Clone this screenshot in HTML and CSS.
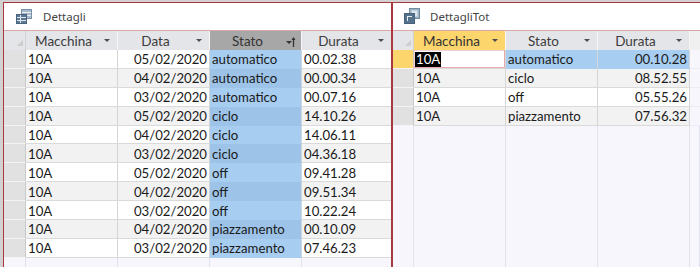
FILE: index.html
```html
<!DOCTYPE html>
<html lang="it">
<head>
<meta charset="utf-8">
<title>Dettagli</title>
<link rel="stylesheet" href="styles.css">
</head>
<body>
<div class="desk">
  <section class="win win-left">
    <div class="title">
      <svg class="ico" width="16" height="15" viewBox="0 0 16 15">
        <rect x="5.5" y="0.5" width="10" height="9" fill="#a9b9c9" stroke="#7890a8"/>
        <line x1="6" y1="3.5" x2="15" y2="3.5" stroke="#e9eef3"/>
        <line x1="6" y1="6.5" x2="15" y2="6.5" stroke="#e9eef3"/>
        <rect x="0.5" y="5.5" width="10" height="9" fill="#5d7893" stroke="#4a6480"/>
        <line x1="1" y1="8.5" x2="10" y2="8.5" stroke="#dfe7ef"/>
        <line x1="1" y1="11.5" x2="10" y2="11.5" stroke="#dfe7ef"/>
        <line x1="4.5" y1="6" x2="4.5" y2="14" stroke="#dfe7ef"/>
      </svg>
      <span>Dettagli</span>
    </div>
    <div class="grid">
      <div class="hrow">
        <div class="hc sel-l corner"><i class="tri"></i></div>
        <div class="hc w92">Macchina<i class="dd"></i></div>
        <div class="hc w92">Data<i class="dd"></i></div>
        <div class="hc w92 sorted">Stato
          <svg class="sorticon" width="10" height="11" viewBox="0 0 10 11">
            <path d="M0 5h6l-3 3z" fill="#333"/>
            <path d="M7.5 11V2" stroke="#333" stroke-width="1.3"/>
            <path d="M5.5 4l2-3 2 3z" fill="#333"/>
          </svg>
        </div>
        <div class="hc w89 last">Durata<i class="dd"></i></div>
      </div>
      <div class="row"><div class="c sel-l"></div><div class="c w92">10A</div><div class="c w92 r">05/02/2020</div><div class="c w92 blue">automatico</div><div class="c w89 last">00.02.38</div></div>
      <div class="row alt"><div class="c sel-l"></div><div class="c w92">10A</div><div class="c w92 r">04/02/2020</div><div class="c w92 blue">automatico</div><div class="c w89 last">00.00.34</div></div>
      <div class="row"><div class="c sel-l"></div><div class="c w92">10A</div><div class="c w92 r">03/02/2020</div><div class="c w92 blue">automatico</div><div class="c w89 last">00.07.16</div></div>
      <div class="row alt"><div class="c sel-l"></div><div class="c w92">10A</div><div class="c w92 r">05/02/2020</div><div class="c w92 blue">ciclo</div><div class="c w89 last">14.10.26</div></div>
      <div class="row"><div class="c sel-l"></div><div class="c w92">10A</div><div class="c w92 r">04/02/2020</div><div class="c w92 blue">ciclo</div><div class="c w89 last">14.06.11</div></div>
      <div class="row alt"><div class="c sel-l"></div><div class="c w92">10A</div><div class="c w92 r">03/02/2020</div><div class="c w92 blue">ciclo</div><div class="c w89 last">04.36.18</div></div>
      <div class="row"><div class="c sel-l"></div><div class="c w92">10A</div><div class="c w92 r">05/02/2020</div><div class="c w92 blue">off</div><div class="c w89 last">09.41.28</div></div>
      <div class="row alt"><div class="c sel-l"></div><div class="c w92">10A</div><div class="c w92 r">04/02/2020</div><div class="c w92 blue">off</div><div class="c w89 last">09.51.34</div></div>
      <div class="row"><div class="c sel-l"></div><div class="c w92">10A</div><div class="c w92 r">03/02/2020</div><div class="c w92 blue">off</div><div class="c w89 last">10.22.24</div></div>
      <div class="row alt"><div class="c sel-l"></div><div class="c w92">10A</div><div class="c w92 r">04/02/2020</div><div class="c w92 blue">piazzamento</div><div class="c w89 last">00.10.09</div></div>
      <div class="row"><div class="c sel-l"></div><div class="c w92">10A</div><div class="c w92 r">03/02/2020</div><div class="c w92 blue">piazzamento</div><div class="c w89 last">07.46.23</div></div>
      <div class="empty"><div class="e sel-l"></div><div class="e w92"></div><div class="e w92"></div><div class="e w92"></div><div class="e w89 last"></div></div>
    </div>
  </section>

  <section class="win win-right">
    <div class="title title-r">
      <svg class="ico" width="16" height="16" viewBox="0 0 16 16">
        <rect x="5.5" y="0.5" width="10" height="10" fill="#9fb4c4" stroke="#6f8ca3"/>
        <rect x="7.5" y="2.5" width="6" height="6" fill="#dce6ee"/>
        <rect x="0.5" y="5.5" width="10" height="10" fill="#55728d" stroke="#45617c"/>
        <path d="M3 8h5v1H4v4H3z" fill="#e6edf3"/>
      </svg>
      <span>DettagliTot</span>
    </div>
    <div class="grid">
      <div class="hrow">
        <div class="hc sel-r corner"><i class="tri"></i></div>
        <div class="hc w92 active">Macchina<i class="dd"></i></div>
        <div class="hc w92">Stato<i class="dd"></i></div>
        <div class="hc w92">Durata<i class="dd"></i></div>
        <div class="hc fill"></div>
      </div>
      <div class="row"><div class="c sel-r cur"></div><div class="c w92 focus"><span class="hl">10A</span></div><div class="c w92 blue">automatico</div><div class="c w92 blue r">00.10.28</div><div class="e fill"></div></div>
      <div class="row alt"><div class="c sel-r"></div><div class="c w92">10A</div><div class="c w92">ciclo</div><div class="c w92 r">08.52.55</div><div class="e fill"></div></div>
      <div class="row"><div class="c sel-r"></div><div class="c w92">10A</div><div class="c w92">off</div><div class="c w92 r">05.55.26</div><div class="e fill"></div></div>
      <div class="row alt"><div class="c sel-r"></div><div class="c w92">10A</div><div class="c w92">piazzamento</div><div class="c w92 r">07.56.32</div><div class="e fill"></div></div>
      <div class="empty"><div class="e sel-r"></div><div class="e w92"></div><div class="e w92"></div><div class="e w92"></div><div class="e fill"></div></div>
    </div>
  </section>
</div>
</body>
</html>
```

FILE: styles.css
```css
* { box-sizing: border-box; }
html, body { margin: 0; height: 100%; }
body {
  background: #d2d2d2;
  font-family: Lato, "Liberation Sans", sans-serif;
  overflow: hidden;
}
.desk {
  display: flex;
  height: 267px;
  padding: 2px 0 0 3px;
}
.win {
  background: #fff;
  border: 1px solid #a83a3f;
  border-bottom: none;
  display: flex;
  flex-direction: column;
}
.win-left { width: 389px; flex: none; }
.win-right { flex: 1; border-right: none; }

.title {
  height: 27px;
  flex: none;
  display: flex;
  align-items: center;
  gap: 11px;
  padding: 0 0 1px 12px;
  font: 11.5px "Noto Sans", "Open Sans", sans-serif;
  color: #444;
}
.title-r { padding-left: 11px; gap: 10px; }
.ico { flex: none; display: block; }

.grid {
  flex: 1;
  display: flex;
  flex-direction: column;
  background: #f6f6fc;
}
.hrow {
  display: flex;
  height: 20px;
  flex: none;
  border-top: 1px solid #d9a6a8;
  background: #e4e5e9;
}
.hc {
  position: relative;
  height: 100%;
  display: flex;
  align-items: center;
  justify-content: center;
  padding-right: 16px;
  font-size: 13.5px;
  color: #3c3c3c;
  border-right: 1px solid #f6f6f6;
  white-space: nowrap;
}
.hc.sorted { background: #a7a7a7; color: #333; }
.hc.active { background: #fcd56c; color: #333; }
.hc.corner { padding: 0; border-right-color: #d2d2d2; }
.hc.fill { flex: 1; background: #f0f0f0; border-right: none; padding: 0; }
.hc.last { border-right: none; }

.dd {
  position: absolute;
  right: 7px;
  top: 8px;
  width: 0;
  height: 0;
  border-left: 3px solid transparent;
  border-right: 3px solid transparent;
  border-top: 3px solid #4d4d4d;
}
.tri {
  position: absolute;
  right: 2px;
  bottom: 4px;
  width: 0;
  height: 0;
  border-left: 6px solid transparent;
  border-bottom: 6px solid #cdcdcd;
}
.sorticon { position: absolute; right: 5px; top: 5px; }

.row {
  display: flex;
  height: 18.9px;
  flex: none;
  background: #fff;
}
.row.alt { background: #f2f2f2; }
.c {
  height: 100%;
  display: flex;
  align-items: center;
  padding: 1px 2px 0;
  font-size: 13.2px;
  color: #1a1a1a;
  white-space: nowrap;
  overflow: hidden;
  border-right: 1px solid #d5d5d5;
  border-bottom: 1px solid #dadada;
}
.c.r { justify-content: flex-end; }
.c.last { border-right: none; }
.c.blue { background: #a7cdf1; border-bottom-color: #a7cdf1; }
.row.alt .c.blue { background: #9dc4e8; border-bottom-color: #9dc4e8; }
.c.focus {
  background: #fff;
  box-shadow: inset -1px -1px 0 #eaa9ab, inset 1px 1px 0 #f3d0d1;
}
.hl { background: #000; color: #fff; padding: 0 1px; margin-left: -1px; line-height: 15px; }

.sel-l { width: 22px; flex: none; }
.sel-r { width: 21px; flex: none; }
.c.sel-l, .c.sel-r {
  background: #e1e1e1;
  border-right-color: #c9c9c9;
  border-bottom-color: #f4f4f4;
}
.c.sel-r.cur { background: #fcd56c; }
.w92 { width: 92px; flex: none; }
.w89 { width: 89px; flex: none; }
.fill { flex: 1; }

.empty { flex: 1; display: flex; }
.e {
  height: 100%;
  border-right: 1px solid #e2e2ee;
  background: #f6f6fc;
}
.e.last { border-right: none; }
.row .e.fill { border-right: none; border-bottom: 1px solid #ececf4; }
```
